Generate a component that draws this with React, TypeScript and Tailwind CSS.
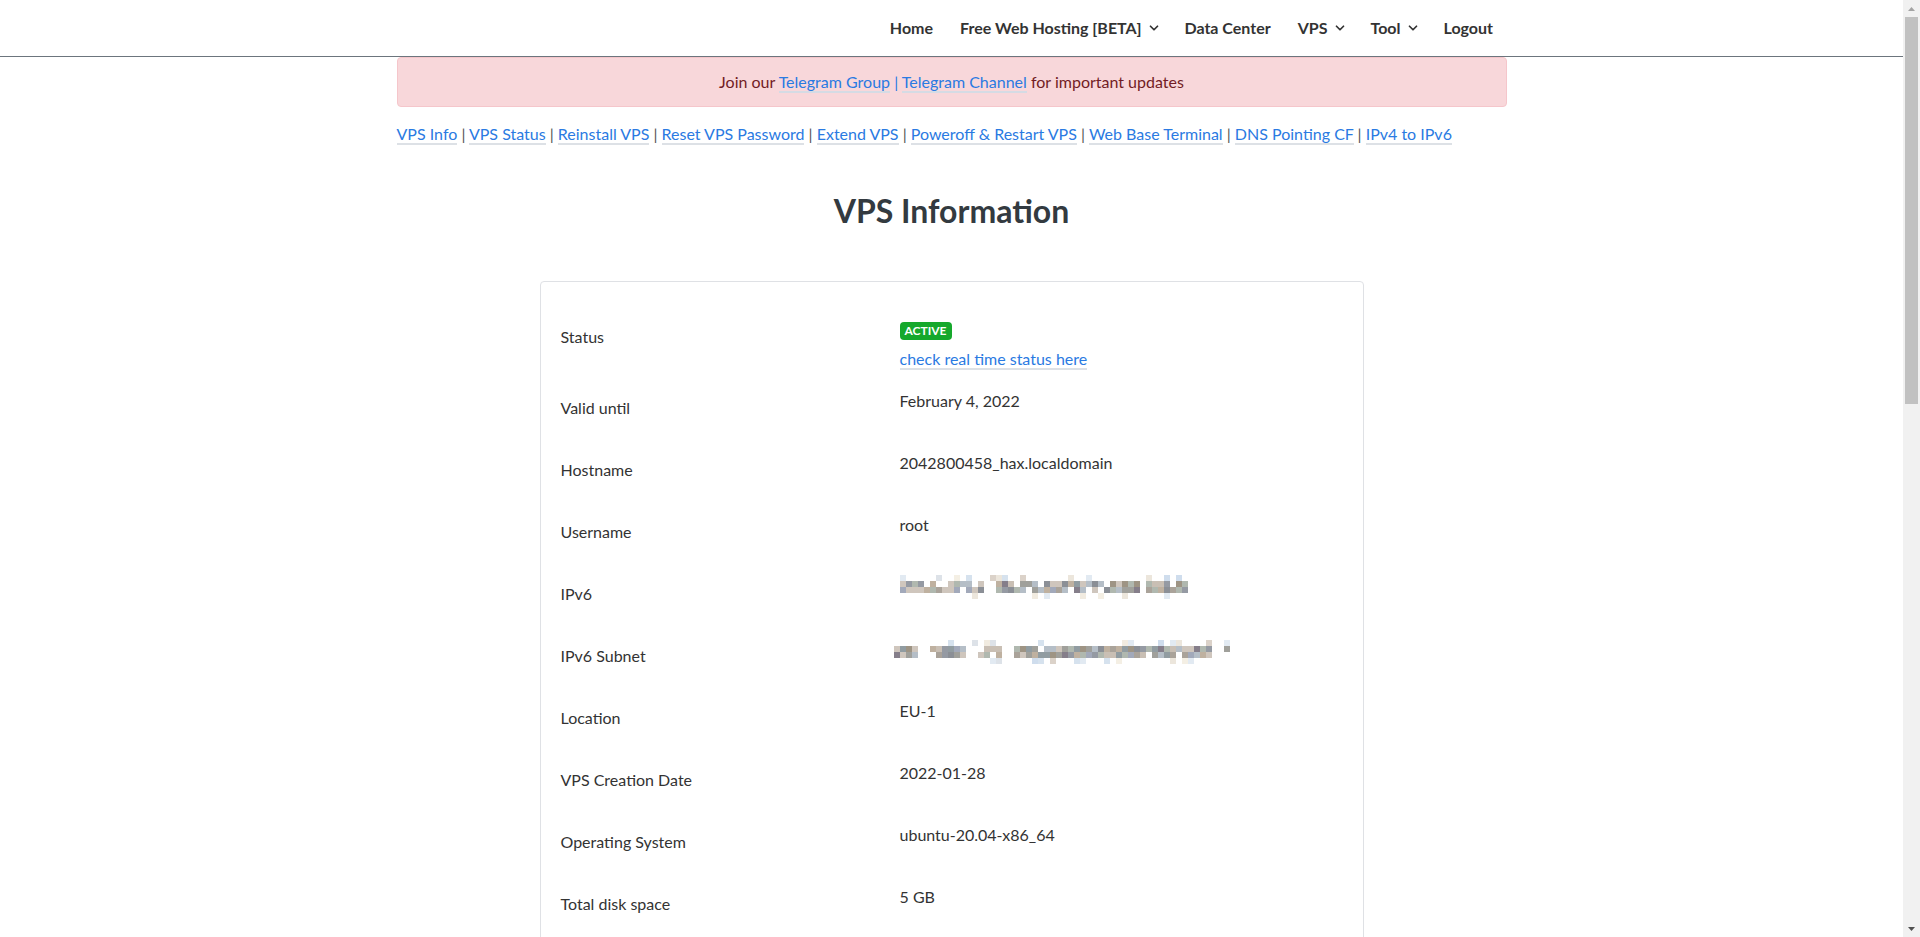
import { ChevronDown } from "lucide-react";

const navItems = [
  { label: "Home" },
  { label: "Free Web Hosting [BETA]", dropdown: true },
  { label: "Data Center" },
  { label: "VPS", dropdown: true },
  { label: "Tool", dropdown: true },
  { label: "Logout" },
];

const subLinks = [
  "VPS Info",
  "VPS Status",
  "Reinstall VPS",
  "Reset VPS Password",
  "Extend VPS",
  "Poweroff & Restart VPS",
  "Web Base Terminal",
  "DNS Pointing CF",
  "IPv4 to IPv6",
];

// small seeded random so the pixelated (redacted) values stay the same each render
function mulberry32(seed: number) {
  let a = seed;
  return () => {
    a |= 0;
    a = (a + 0x6d2b79f5) | 0;
    let t = Math.imul(a ^ (a >>> 15), 1 | a);
    t = (t + Math.imul(t ^ (t >>> 7), 61 | t)) ^ t;
    return ((t ^ (t >>> 14)) >>> 0) / 4294967296;
  };
}

const midColors = ["#c9bfb4", "#aaa39a", "#9e9484", "#857e8a", "#a2a9ba", "#919ca1", "#b0b8af", "#bfb1a0", "#a0a09b", "#b5bec7", "#cfc6bd", "#959aa3", "#8b8f96"];
const lightColors = ["#e2eaf2", "#ece6dc", "#d6e2ee", "#f1ebe0", "#dde2e8", "#cfdded", "#f4efe4", "#dbd2c9"];

function Mosaic({ seed, cols, gaps }: { seed: number; cols: number; gaps: number[] }) {
  const rand = mulberry32(seed);
  const cells: { x: number; y: number; c: string }[] = [];
  for (let r = 0; r < 4; r++) {
    for (let c = 0; c < cols; c++) {
      const edge = r === 0 || r === 3;
      if (gaps.includes(c) && rand() < 0.85) continue;
      const prob = edge ? 0.25 : 0.9;
      if (rand() < prob) {
        const pal = edge ? lightColors : midColors;
        cells.push({ x: c * 6, y: r * 6, c: pal[Math.floor(rand() * pal.length)] });
      }
    }
  }
  return (
    <svg width={cols * 6} height={24} className="block">
      {cells.map((cell, i) => (
        <rect key={i} x={cell.x} y={cell.y} width={6} height={6} fill={cell.c} />
      ))}
    </svg>
  );
}

const rows: [string, React.ReactNode][] = [
  ["Valid until", "February 4, 2022"],
  ["Hostname", "2042800458_hax.localdomain"],
  ["Username", "root"],
  ["IPv6", <Mosaic seed={7} cols={48} gaps={[14, 15, 40]} />],
  ["IPv6 Subnet", <div className="-ml-[6px] pt-[3px]"><Mosaic seed={21} cols={56} gaps={[4, 5, 12, 13, 18, 19, 53, 54]} /></div>],
  ["Location", "EU-1"],
  ["VPS Creation Date", "2022-01-28"],
  ["Operating System", "ubuntu-20.04-x86_64"],
  ["Total disk space", "5 GB"],
];

function Scrollbar() {
  return (
    <div className="flex h-full w-[17px] shrink-0 flex-col bg-[#f1f1f1]">
      <div className="flex h-[17px] items-center justify-center">
        <svg width="7" height="4" viewBox="0 0 7 4">
          <path d="M3.5 0 L7 4 L0 4 Z" fill="#a3a3a3" />
        </svg>
      </div>
      <div className="mx-[2px] h-[387px] bg-[#c1c1c1]" />
      <div className="flex-1" />
      <div className="flex h-[17px] items-center justify-center">
        <svg width="7" height="4" viewBox="0 0 7 4">
          <path d="M0 0 L7 0 L3.5 4 Z" fill="#505050" />
        </svg>
      </div>
    </div>
  );
}

export default function App() {
  return (
    <div className="flex h-screen overflow-hidden bg-white font-['Lato',sans-serif] text-[16px] leading-[1.5] text-[#333]">
      <div className="min-w-0 flex-1 overflow-hidden">
        {/* top navbar */}
        <header className="h-[57px] border-b border-[#6c757d]">
          <div className="mx-auto flex h-full w-[1140px] items-center justify-end px-[15px]">
            <nav className="flex items-center">
              {navItems.map((item) => (
                <a key={item.label} className="flex items-center px-[13.5px] font-bold text-[#333]">
                  {item.label}
                  {item.dropdown && (
                    <ChevronDown size={14} strokeWidth={3} className="ml-[5.5px] -mr-[3.5px] text-[#333]" />
                  )}
                </a>
              ))}
            </nav>
          </div>
        </header>

        <main className="mx-auto w-[1140px] px-[15px]">
          <div className="rounded-[4px] border border-[#f5c6cb] bg-[#f8d7da] px-[20px] py-[12px] text-center text-[#721c24]">
            Join our{" "}
            <a className="border-b-2 border-[#d5dbe4] text-[#2a7ae2]">Telegram Group</a>
            <span className="text-[#2a7ae2]"> | </span>
            <a className="border-b-2 border-[#d5dbe4] text-[#2a7ae2]">Telegram Channel</a> for important updates
          </div>

          <p className="mt-[15px]">
            {subLinks.map((l, i) => (
              <span key={l}>
                {i > 0 && <span className="text-[#555]"> | </span>}
                <a className="border-b-2 border-[#dde1e6] text-[#2a7ae2]">{l}</a>
              </span>
            ))}
          </p>

          <h2 className="mt-[46px] text-center text-[32px] leading-[1.2] font-bold text-[#333a40]">
            VPS Information
          </h2>

          <div className="mx-auto mt-[51px] mb-[40px] min-h-[1860px] w-[824px] rounded-[4px] border border-[#dfe1e5] px-[20px] pt-[20px]">
            <div className="grid h-[67px] grid-cols-[339px_1fr]">
              <div className="pt-[23px]">Status</div>
              <div className="pt-[20px]">
                <div>
                  <span className="inline-block rounded-[4px] bg-[#16a82c] px-[5px] py-[3px] align-top text-[12px] leading-none font-bold text-white">
                    ACTIVE
                  </span>
                </div>
                <div className="mt-[1px]">
                  <a className="border-b-2 border-[#dde1e6] text-[#2a7ae2]">check real time status here</a>
                </div>
              </div>
            </div>
            {rows.map(([label, value]) => (
              <div key={label} className="grid h-[62px] grid-cols-[339px_1fr]">
                <div className="pt-[27px]">{label}</div>
                <div className="pt-[20px]">{value}</div>
              </div>
            ))}
          </div>
        </main>
      </div>
      <Scrollbar />
    </div>
  );
}
